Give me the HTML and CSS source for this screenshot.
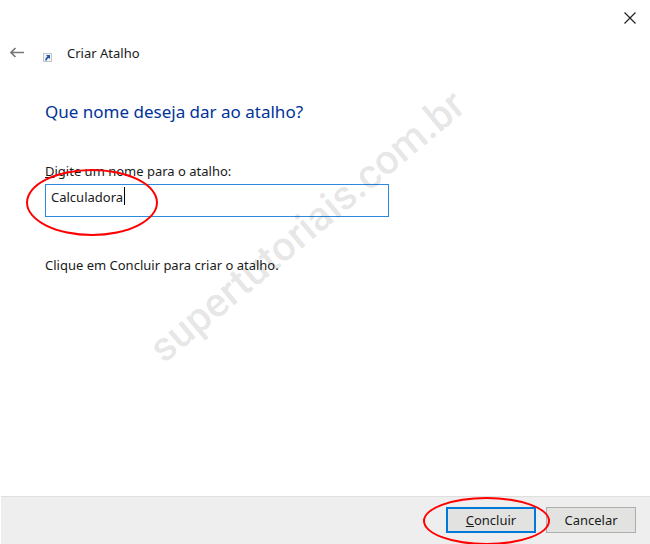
FILE: index.html
```html
<!DOCTYPE html>
<html lang="pt-BR">
<head>
    <meta charset="UTF-8">
    <meta name="viewport" content="width=device-width, initial-scale=1.0">
    <link rel="stylesheet" href="styles.css">
    <title>Criar Atalho</title>
</head>
<body>
    <form class="wizard">
        <div class="title-bar">
            <button type="button" class="icon-btn" aria-label="Fechar">
                <svg width="12" height="12" viewBox="0 0 12 12">
                    <path d="M0.5 0.5L11.5 11.5M11.5 0.5L0.5 11.5" fill="none" stroke="#222" stroke-width="1.2"/>
                </svg>
            </button>
        </div>
        <header class="header">
            <button type="button" class="icon-btn" aria-label="Voltar">
                <svg width="14" height="12" viewBox="0 0 14 12">
                    <path d="M14 5.5H1M5.5 1L1 5.5L5.5 10" fill="none" stroke="#777" stroke-width="1.6"/>
                </svg>
            </button>
            <svg class="shortcut-icon" width="9" height="9" viewBox="0 0 9 9">
                <rect x="0.5" y="0.5" width="8" height="8" fill="#f4f4f4" stroke="#c4c4c4"/>
                <path d="M3 2H7V6L5.8 4.9C4.6 5.3 4 6 3.8 7.4H2.2C2.2 5.6 3 4.3 4.4 3.5Z" fill="#2459a8"/>
            </svg>
            <span class="header-title">Criar Atalho</span>
        </header>
        <main class="content">
            <h1>Que nome deseja dar ao atalho?</h1>
            <label for="shortcut-name"><u>D</u>igite um nome para o atalho:</label>
            <div class="field">
                <input type="text" id="shortcut-name" value="Calculadora">
                <span class="caret"></span>
                <span class="mark mark-field"></span>
            </div>
            <p>Clique em Concluir para criar o atalho.</p>
        </main>
        <footer class="footer">
            <div class="finish">
                <button type="submit" class="btn btn-default"><u>C</u>oncluir</button>
                <span class="mark mark-finish"></span>
            </div>
            <button type="button" class="btn">Cancelar</button>
        </footer>
        <div class="watermark">supertutoriais.com.br</div>
    </form>
</body>
</html>
```

FILE: styles.css
```css
* {
    box-sizing: border-box;
}

body {
    margin: 0;
    font-family: "Noto Sans", "Open Sans", sans-serif;
    font-size: 13px;
    line-height: 20px;
    color: #1a1a1a;
    background-color: #fff;
}

.wizard {
    position: relative;
    display: flex;
    flex-direction: column;
    min-height: 100vh;
    overflow: hidden;
}

.title-bar {
    display: flex;
    justify-content: flex-end;
    padding: 12px 14px 0;
}

.icon-btn {
    display: flex;
    padding: 0;
    border: none;
    background: none;
}

.header {
    display: flex;
    align-items: center;
    padding: 19px 10px 0;
}

.shortcut-icon {
    margin: 9px 15px 0 19px;
}

.content {
    flex: 1;
    padding: 36px 45px 0;
}

h1 {
    margin: 0 0 36px;
    font-size: 17px;
    font-weight: normal;
    line-height: 26px;
    color: #003399;
}

label {
    display: block;
}

.field {
    position: relative;
    max-width: 344px;
    margin: 3px 0 38px;
}

.field input {
    display: block;
    width: 100%;
    height: 33px;
    padding: 0 5px 8px;
    border: 1px solid #2b8ade;
    outline: none;
    font: inherit;
    color: inherit;
}

.caret {
    position: absolute;
    top: 3px;
    left: 79px;
    width: 1px;
    height: 18px;
    background-color: #000;
}

p {
    margin: 0;
}

.footer {
    display: flex;
    justify-content: flex-end;
    gap: 10px;
    margin-left: 1px;
    padding: 10px 14px 11px;
    border-top: 1px solid #dfdfdf;
    background-color: #eee;
}

.finish {
    position: relative;
}

.btn {
    width: 90px;
    height: 26px;
    padding: 0;
    border: 1px solid #adadad;
    background-color: #e2e3e1;
    font: inherit;
    color: inherit;
}

.btn-default {
    border: 2px solid #0078d7;
}

/* red circles around the things to look at */
.mark {
    position: absolute;
    border: 2px solid #f00;
    border-radius: 50%;
    pointer-events: none;
}

.mark-field {
    top: -15px;
    left: -19px;
    width: 132px;
    height: 67px;
}

.mark-finish {
    top: -10px;
    left: -23px;
    width: 127px;
    height: 48px;
}

.watermark {
    position: absolute;
    top: 206px;
    left: 87px;
    width: 440px;
    font-family: Roboto, sans-serif;
    font-size: 41px;
    font-weight: 500;
    line-height: 40px;
    text-align: center;
    color: rgba(0, 0, 0, 0.1);
    transform: rotate(-40deg);
    pointer-events: none;
}
```
